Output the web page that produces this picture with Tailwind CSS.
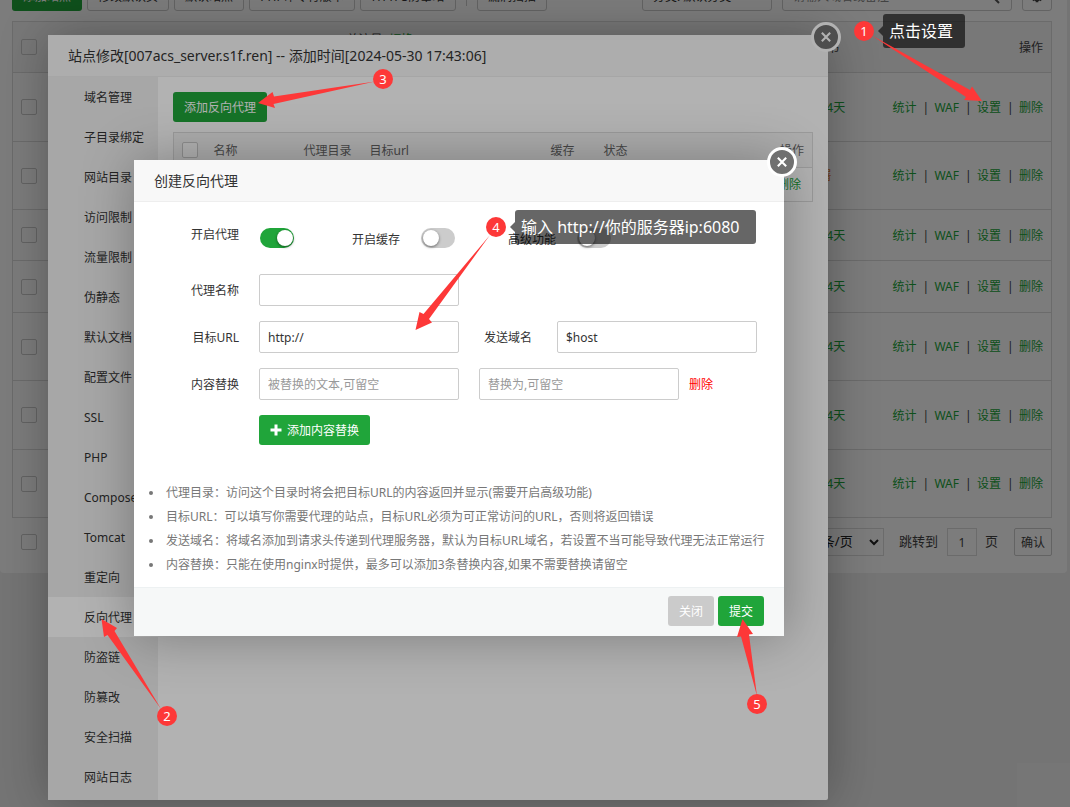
<!DOCTYPE html>
<html lang="zh-CN">
<head>
<meta charset="utf-8">
<title>网站</title>
<script src="https://cdn.jsdelivr.net/npm/@tailwindcss/browser@4"></script>
</head>
<body class="bg-[#f0f0f0] font-['Noto_Sans','Noto_Sans_CJK_SC',sans-serif] text-xs text-[#444]">
<div class="relative h-screen w-full overflow-hidden">

  <!-- Site list -->
  <main class="mr-[3px] rounded-b bg-white px-3 pr-[15px] pb-[17px]">
    <div class="-mt-5 flex h-8 items-center gap-[5px] text-[#333]">
      <button class="h-[30px] w-[70px] shrink-0 rounded-[3px] bg-[#20a53a] pt-0.5 text-white">添加站点</button>
      <button class="h-[30px] w-[82px] shrink-0 rounded-[3px] border border-[#ccc] pt-0.5">修改默认页</button>
      <button class="h-[30px] w-[70px] shrink-0 rounded-[3px] border border-[#ccc] pt-0.5">默认站点</button>
      <button class="h-[30px] w-[106px] shrink-0 rounded-[3px] border border-[#ccc] pt-0.5">PHP命令行版本</button>
      <button class="h-[30px] w-24 shrink-0 rounded-[3px] border border-[#ccc] pt-0.5">HTTPS防窜站</button>
      <span class="mx-[5px] h-5 w-px bg-[#ccc]"></span>
      <button class="h-[30px] w-[70px] shrink-0 rounded-[3px] border border-[#ccc] pt-0.5">漏洞扫描</button>
      <div class="ml-auto flex gap-[10px]">
        <select aria-label="分类" class="h-[30px] w-[130px] appearance-none rounded-[3px] border border-[#ccc] px-2.5 pt-0.5"><option>分类: 默认分类</option></select>
        <div class="flex h-[30px] w-[230px] items-center rounded-[3px] border border-[#ccc] px-2.5 pt-0.5">
          <input aria-label="搜索" placeholder="请输入域名或备注" class="min-w-0 flex-1 placeholder:text-[#888]">
          <svg class="size-4" viewBox="0 0 16 16" fill="none" stroke="#555" stroke-width="2"><circle cx="6" cy="6" r="4"/><path d="M9 9l5 5"/></svg>
        </div>
        <button aria-label="设置" class="flex h-[30px] w-[30px] items-center justify-center rounded-[3px] border border-[#ccc]">
          <svg class="size-[14px]" viewBox="0 0 16 16" fill="none" stroke="#444" stroke-width="4"><circle cx="8" cy="8" r="4"/><path d="M8 1v2M8 13v2M1 8h2M13 8h2M3 3l1 1M12 12l1 1M3 13l1-1M12 4l1-1" stroke-width="3"/></svg>
        </button>
      </div>
    </div>

    <table class="mt-[9px] w-full table-fixed border-collapse border border-[#ddd] text-left">
      <colgroup><col class="w-10"><col class="w-[286px]"><col><col class="w-24"><col class="w-[168px]"></colgroup>
      <thead>
        <tr class="h-[51px] border-b border-[#ddd] bg-[#f6f6f6]">
          <th class="pl-2"><input type="checkbox" aria-label="全选" class="block size-4 appearance-none rounded-xs border border-[#ccc]"></th>
          <th></th>
          <th class="pb-[14px] pl-2 font-normal">总流量 <a href="#" class="text-[#20a53a]">(切换)</a></th>
          <th class="pt-0.5 pl-2 font-normal">SSL证书</th>
          <th class="pt-0.5 pr-2 text-right font-normal">操作</th>
        </tr>
      </thead>
      <tbody class="text-[#20a53a]">
        <tr class="h-[69px] border-b border-[#ddd]">
          <td class="pl-2"><input type="checkbox" aria-label="选择" class="block size-4 appearance-none rounded-xs border border-[#ccc]"></td><td></td><td></td><td class="pt-px pl-2">剩余84天</td>
          <td class="pt-px"><div class="flex justify-end gap-1.5 pr-2"><a href="#">统计</a><i class="w-1.5 text-center not-italic text-[#444]">|</i><a href="#">WAF</a><i class="w-1.5 text-center not-italic text-[#444]">|</i><a href="#">设置</a><i class="w-1.5 text-center not-italic text-[#444]">|</i><a href="#">删除</a></div></td>
        </tr>
        <tr class="h-[68px] border-b border-[#ddd]">
          <td class="pl-2"><input type="checkbox" aria-label="选择" class="block size-4 appearance-none rounded-xs border border-[#ccc]"></td><td></td><td></td><td class="pt-px pl-2 text-[#f08030]">未部署</td>
          <td class="pt-px"><div class="flex justify-end gap-1.5 pr-2"><a href="#">统计</a><i class="w-1.5 text-center not-italic text-[#444]">|</i><a href="#">WAF</a><i class="w-1.5 text-center not-italic text-[#444]">|</i><a href="#">设置</a><i class="w-1.5 text-center not-italic text-[#444]">|</i><a href="#">删除</a></div></td>
        </tr>
        <tr class="h-[51px] border-b border-[#ddd]">
          <td class="pl-2"><input type="checkbox" aria-label="选择" class="block size-4 appearance-none rounded-xs border border-[#ccc]"></td><td></td><td></td><td class="pt-px pl-2">剩余84天</td>
          <td class="pt-px"><div class="flex justify-end gap-1.5 pr-2"><a href="#">统计</a><i class="w-1.5 text-center not-italic text-[#444]">|</i><a href="#">WAF</a><i class="w-1.5 text-center not-italic text-[#444]">|</i><a href="#">设置</a><i class="w-1.5 text-center not-italic text-[#444]">|</i><a href="#">删除</a></div></td>
        </tr>
        <tr class="h-[52px] border-b border-[#ddd]">
          <td class="pl-2"><input type="checkbox" aria-label="选择" class="block size-4 appearance-none rounded-xs border border-[#ccc]"></td><td></td><td></td><td class="pt-px pl-2">剩余84天</td>
          <td class="pt-px"><div class="flex justify-end gap-1.5 pr-2"><a href="#">统计</a><i class="w-1.5 text-center not-italic text-[#444]">|</i><a href="#">WAF</a><i class="w-1.5 text-center not-italic text-[#444]">|</i><a href="#">设置</a><i class="w-1.5 text-center not-italic text-[#444]">|</i><a href="#">删除</a></div></td>
        </tr>
        <tr class="h-[68px] border-b border-[#ddd]">
          <td class="pl-2"><input type="checkbox" aria-label="选择" class="block size-4 appearance-none rounded-xs border border-[#ccc]"></td><td></td><td></td><td class="pt-px pl-2">剩余84天</td>
          <td class="pt-px"><div class="flex justify-end gap-1.5 pr-2"><a href="#">统计</a><i class="w-1.5 text-center not-italic text-[#444]">|</i><a href="#">WAF</a><i class="w-1.5 text-center not-italic text-[#444]">|</i><a href="#">设置</a><i class="w-1.5 text-center not-italic text-[#444]">|</i><a href="#">删除</a></div></td>
        </tr>
        <tr class="h-[69px] border-b border-[#ddd]">
          <td class="pl-2"><input type="checkbox" aria-label="选择" class="block size-4 appearance-none rounded-xs border border-[#ccc]"></td><td></td><td></td><td class="pt-px pl-2">剩余84天</td>
          <td class="pt-px"><div class="flex justify-end gap-1.5 pr-2"><a href="#">统计</a><i class="w-1.5 text-center not-italic text-[#444]">|</i><a href="#">WAF</a><i class="w-1.5 text-center not-italic text-[#444]">|</i><a href="#">设置</a><i class="w-1.5 text-center not-italic text-[#444]">|</i><a href="#">删除</a></div></td>
        </tr>
        <tr class="h-[68px] border-b border-[#ddd]">
          <td class="pl-2"><input type="checkbox" aria-label="选择" class="block size-4 appearance-none rounded-xs border border-[#ccc]"></td><td></td><td></td><td class="pt-px pl-2">剩余84天</td>
          <td class="pt-px"><div class="flex justify-end gap-1.5 pr-2"><a href="#">统计</a><i class="w-1.5 text-center not-italic text-[#444]">|</i><a href="#">WAF</a><i class="w-1.5 text-center not-italic text-[#444]">|</i><a href="#">设置</a><i class="w-1.5 text-center not-italic text-[#444]">|</i><a href="#">删除</a></div></td>
        </tr>
      </tbody>
    </table>

    <div class="mt-[10px] flex h-7 items-center text-[13px]">
      <input type="checkbox" aria-label="全选" class="ml-[9px] size-4 appearance-none rounded-xs border border-[#ccc]">
      <div class="relative ml-auto h-7 w-24 border border-[#ddd]">
        <select aria-label="每页条数" class="h-full w-full appearance-none pl-[18px] text-[13px] text-[#222]"><option>20条/页</option></select>
        <svg class="pointer-events-none absolute top-[10px] right-[4px] h-[7px] w-[10px]" viewBox="0 0 10 7" fill="none" stroke="#222" stroke-width="2"><path d="M1 1l4 4 4-4"/></svg>
      </div>
      <label for="page" class="ml-[15px]">跳转到</label>
      <input id="page" value="1" class="ml-[9px] h-7 w-[30px] border border-[#ddd] text-center text-xs">
      <span class="ml-2">页</span>
      <button class="ml-4 h-7 w-[38px] rounded-xs border border-[#ccc] pt-0.5 text-xs">确认</button>
    </div>
  </main>

  <div class="absolute inset-0 bg-black/30"></div>

  <!-- Site settings window -->
  <section class="absolute top-[35px] left-12 flex h-[765px] w-[780px] flex-col rounded-xs bg-white shadow-[1px_1px_50px_rgba(0,0,0,0.3)]">
    <h2 class="flex h-[42px] shrink-0 items-center border-b border-[#eee] bg-[#f8f8f8] px-5 text-sm text-[#333]">站点修改[007acs_server.s1f.ren] -- 添加时间[2024-05-30 17:43:06]</h2>
    <button aria-label="关闭窗口" class="absolute -top-[13px] -right-[13px] flex size-[30px] items-center justify-center rounded-full border-[3px] border-white bg-[#707070]">
      <svg class="size-[10px]" viewBox="0 0 12 12" stroke="#fff" stroke-width="2.500"><path d="M1 1l10 10M11 1L1 11"/></svg>
    </button>
    <div class="flex min-h-0 flex-1">
      <nav class="flex w-[110px] shrink-0 flex-col bg-[#f0f0f0] leading-[38px] text-[#333]">
        <a href="#" class="pt-0.5 pl-9">域名管理</a>
        <a href="#" class="pt-0.5 pl-9">子目录绑定</a>
        <a href="#" class="pt-0.5 pl-9">网站目录</a>
        <a href="#" class="pt-0.5 pl-9">访问限制</a>
        <a href="#" class="pt-0.5 pl-9">流量限制</a>
        <a href="#" class="pt-0.5 pl-9">伪静态</a>
        <a href="#" class="pt-0.5 pl-9">默认文档</a>
        <a href="#" class="pt-0.5 pl-9">配置文件</a>
        <a href="#" class="pt-0.5 pl-9">SSL</a>
        <a href="#" class="pt-0.5 pl-9">PHP</a>
        <a href="#" class="pt-0.5 pl-9">Composer</a>
        <a href="#" class="pt-0.5 pl-9">Tomcat</a>
        <a href="#" class="pt-0.5 pl-9">重定向</a>
        <a href="#" class="bg-white pt-0.5 pl-9">反向代理</a>
        <a href="#" class="pt-0.5 pl-9">防盗链</a>
        <a href="#" class="pt-0.5 pl-9">防篡改</a>
        <a href="#" class="pt-0.5 pl-9">安全扫描</a>
        <a href="#" class="pt-0.5 pl-9">网站日志</a>
      </nav>
      <div class="flex-1 p-[15px]">
        <button class="h-[30px] rounded-[3px] bg-[#20a53a] px-[11px] pt-0.5 text-white">添加反向代理</button>
        <table class="mt-[10px] w-full table-fixed border-collapse border border-[#ddd] text-left">
          <colgroup><col class="w-8"><col class="w-[90px]"><col class="w-[66px]"><col class="w-[181px]"><col class="w-[53px]"><col></colgroup>
          <thead>
            <tr class="h-[35px] border-b border-[#ddd] bg-[#f6f6f6] text-[#666]">
              <th class="pl-2"><input type="checkbox" aria-label="全选" class="block size-4 appearance-none rounded-xs border border-[#ccc] bg-white"></th>
              <th class="pt-0.5 pl-2 font-normal">名称</th><th class="pt-0.5 pl-2 font-normal">代理目录</th><th class="pt-0.5 pl-2 font-normal">目标url</th><th class="pt-0.5 pl-2 font-normal">缓存</th><th class="pt-0.5 pl-2 font-normal">状态</th>
              <th class="pt-0.5 pr-2 text-right font-normal">操作</th>
            </tr>
          </thead>
          <tbody>
            <tr class="h-[34px]"><td colspan="7" class="pr-[11px] text-right"><a href="#" class="text-[#20a53a]">删除</a></td></tr>
          </tbody>
        </table>
      </div>
    </div>
  </section>

  <div class="absolute inset-0 bg-black/30"></div>

  <!-- Create reverse proxy window -->
  <form class="absolute top-40 left-[134px] flex w-[650px] flex-col bg-white text-[#333] shadow-[1px_1px_50px_rgba(0,0,0,0.3)]">
    <h2 class="flex h-[42px] items-center border-b border-[#eee] bg-[#f8f8f8] px-5 text-sm">创建反向代理</h2>
    <button type="button" aria-label="关闭窗口" class="absolute -top-[13px] -right-[13px] flex size-[30px] items-center justify-center rounded-full border-[3px] border-white bg-[#707070]">
      <svg class="size-[10px]" viewBox="0 0 12 12" stroke="#fff" stroke-width="2.500"><path d="M1 1l10 10M11 1L1 11"/></svg>
    </button>

    <div class="flex flex-col gap-[15px] pt-5">
      <div class="flex h-8 items-center">
        <label for="on" class="mb-[7px] w-[105px] text-right">开启代理</label>
        <span class="relative ml-[21px] block h-5 w-[34px]">
          <input id="on" type="checkbox" checked class="block h-5 w-[34px] appearance-none rounded-full bg-[#ccc] checked:bg-[#20a53a]">
          <span class="pointer-events-none absolute top-0.5 right-px size-4 rounded-full bg-white shadow-[0_1px_3px_rgba(0,0,0,0.5)]"></span>
        </span>
        <label for="cache" class="ml-[58px] mt-[3px]">开启缓存</label>
        <span class="relative ml-[21px] block h-5 w-[34px]">
          <input id="cache" type="checkbox" class="block h-5 w-[34px] appearance-none rounded-full bg-[#ccc]">
          <span class="pointer-events-none absolute top-0.5 left-0.5 size-4 rounded-full bg-white shadow-[0_1px_3px_rgba(0,0,0,0.5)]"></span>
        </span>
        <label for="adv" class="ml-[53px] mt-[3px]">高级功能</label>
        <span class="relative ml-[21px] block h-5 w-[34px]">
          <input id="adv" type="checkbox" class="block h-5 w-[34px] appearance-none rounded-full bg-[#ccc]">
          <span class="pointer-events-none absolute top-0.5 left-0.5 size-4 rounded-full bg-white shadow-[0_1px_3px_rgba(0,0,0,0.5)]"></span>
        </span>
      </div>
      <div class="mt-[5px] flex h-8 items-center">
        <label for="name" class="w-[105px] pt-0.5 text-right">代理名称</label>
        <input id="name" class="ml-5 h-8 w-[200px] rounded-xs border border-[#ccc] px-2">
      </div>
      <div class="flex h-8 items-center">
        <label for="url" class="w-[105px] pt-0.5 text-right">目标URL</label>
        <input id="url" value="http://" class="ml-5 h-8 w-[200px] rounded-xs border border-[#ccc] px-2">
        <label for="host" class="w-[73px] pt-0.5 text-right">发送域名</label>
        <input id="host" value="$host" class="ml-[25px] h-8 w-[200px] rounded-xs border border-[#ccc] px-2">
      </div>
      <div class="flex h-8 items-center">
        <label for="sub1" class="w-[105px] pt-0.5 text-right">内容替换</label>
        <input id="sub1" placeholder="被替换的文本,可留空" class="ml-5 h-8 w-[200px] rounded-xs border border-[#ccc] px-2 placeholder:text-[#999]">
        <input aria-label="替换为" placeholder="替换为,可留空" class="ml-5 h-8 w-[200px] rounded-xs border border-[#ccc] px-2 placeholder:text-[#999]">
        <a href="#" class="ml-[10px] pt-0.5 text-[#f00]">删除</a>
      </div>
      <button type="button" class="ml-[125px] flex h-[30px] w-[111px] items-center justify-center gap-[5px] rounded-[3px] bg-[#20a53a] text-white">
        <svg class="size-3" viewBox="0 0 12 12" fill="none" stroke="#fff" stroke-width="3"><path d="M6 0.500v11M0.500 6h11"/></svg><span class="pt-0.5">添加内容替换</span>
      </button>
    </div>

    <ul class="mt-9 mb-[10px] pl-[15px] leading-6 whitespace-nowrap text-[#777]">
      <li class="flex items-center gap-[13px] before:size-1 before:rounded-full before:bg-[#777] before:content-['']">代理目录：访问这个目录时将会把目标URL的内容返回并显示(需要开启高级功能)</li>
      <li class="flex items-center gap-[13px] before:size-1 before:rounded-full before:bg-[#777] before:content-['']">目标URL：可以填写你需要代理的站点，目标URL必须为可正常访问的URL，否则将返回错误</li>
      <li class="flex items-center gap-[13px] before:size-1 before:rounded-full before:bg-[#777] before:content-['']">发送域名：将域名添加到请求头传递到代理服务器，默认为目标URL域名，若设置不当可能导致代理无法正常运行</li>
      <li class="flex items-center gap-[13px] before:size-1 before:rounded-full before:bg-[#777] before:content-['']">内容替换：只能在使用nginx时提供，最多可以添加3条替换内容,如果不需要替换请留空</li>
    </ul>

    <div class="flex h-[49px] items-center justify-end gap-1 border-t border-[#edf1f2] bg-[#f6f8f8] pr-5 pb-0.5 text-white">
      <button type="button" class="h-[30px] w-[46px] rounded-[3px] bg-[#cbcbcb] pt-0.5">关闭</button>
      <button type="button" class="h-[30px] w-[46px] rounded-[3px] bg-[#20a53a] pt-0.5">提交</button>
    </div>
  </form>

  <!-- Step callouts -->
  <div class="absolute top-[14px] left-[883px] w-[82px] rounded-[3px] bg-black/60 px-1.5 text-base leading-[34px] whitespace-nowrap text-white">点击设置</div>
  <div class="absolute top-[210px] left-[515px] w-[241px] rounded-[3px] bg-black/60 px-1.5 text-base leading-[34px] whitespace-nowrap text-white">输入 http://你的服务器ip:6080</div>
  <svg class="pointer-events-none absolute top-0 left-0" width="1070" height="807" viewBox="0 0 1070 807">
    <g fill="#000" fill-opacity=".6"><path d="M883 26v10l-5-5z"/><path d="M515 222v10l-5-5z"/></g>
    <g fill="#fd3838">
      <path d="M871 35L970 90 972 86.500 982 101 964 100 966 97z"/>
      <path d="M161 709L107.500 635 104 637 101.500 619 117 628 114.500 631z"/>
      <path d="M375 81.500L274 96.500 272.500 92 258 103 275 108 273.500 104z"/>
      <path d="M490 235L423.500 314 419.500 312 415.500 330 432 322.500 429 319z"/>
      <path d="M757 696L749 634.500 753 634 742.500 619 737 637 741 636.500z"/>
    </g>
  </svg>
  <span class="absolute top-[21px] left-[854px] size-5 rounded-full bg-[#fd3838] text-center text-[13px] leading-5 text-white">1</span>
  <span class="absolute top-[706px] left-[157px] size-5 rounded-full bg-[#fd3838] text-center text-[13px] leading-5 text-white">2</span>
  <span class="absolute top-[69px] left-[373px] size-5 rounded-full bg-[#fd3838] text-center text-[13px] leading-5 text-white">3</span>
  <span class="absolute top-[217px] left-[486px] size-5 rounded-full bg-[#fd3838] text-center text-[13px] leading-5 text-white">4</span>
  <span class="absolute top-[694px] left-[747px] size-5 rounded-full bg-[#fd3838] text-center text-[13px] leading-5 text-white">5</span>
</div>
</body>
</html>
